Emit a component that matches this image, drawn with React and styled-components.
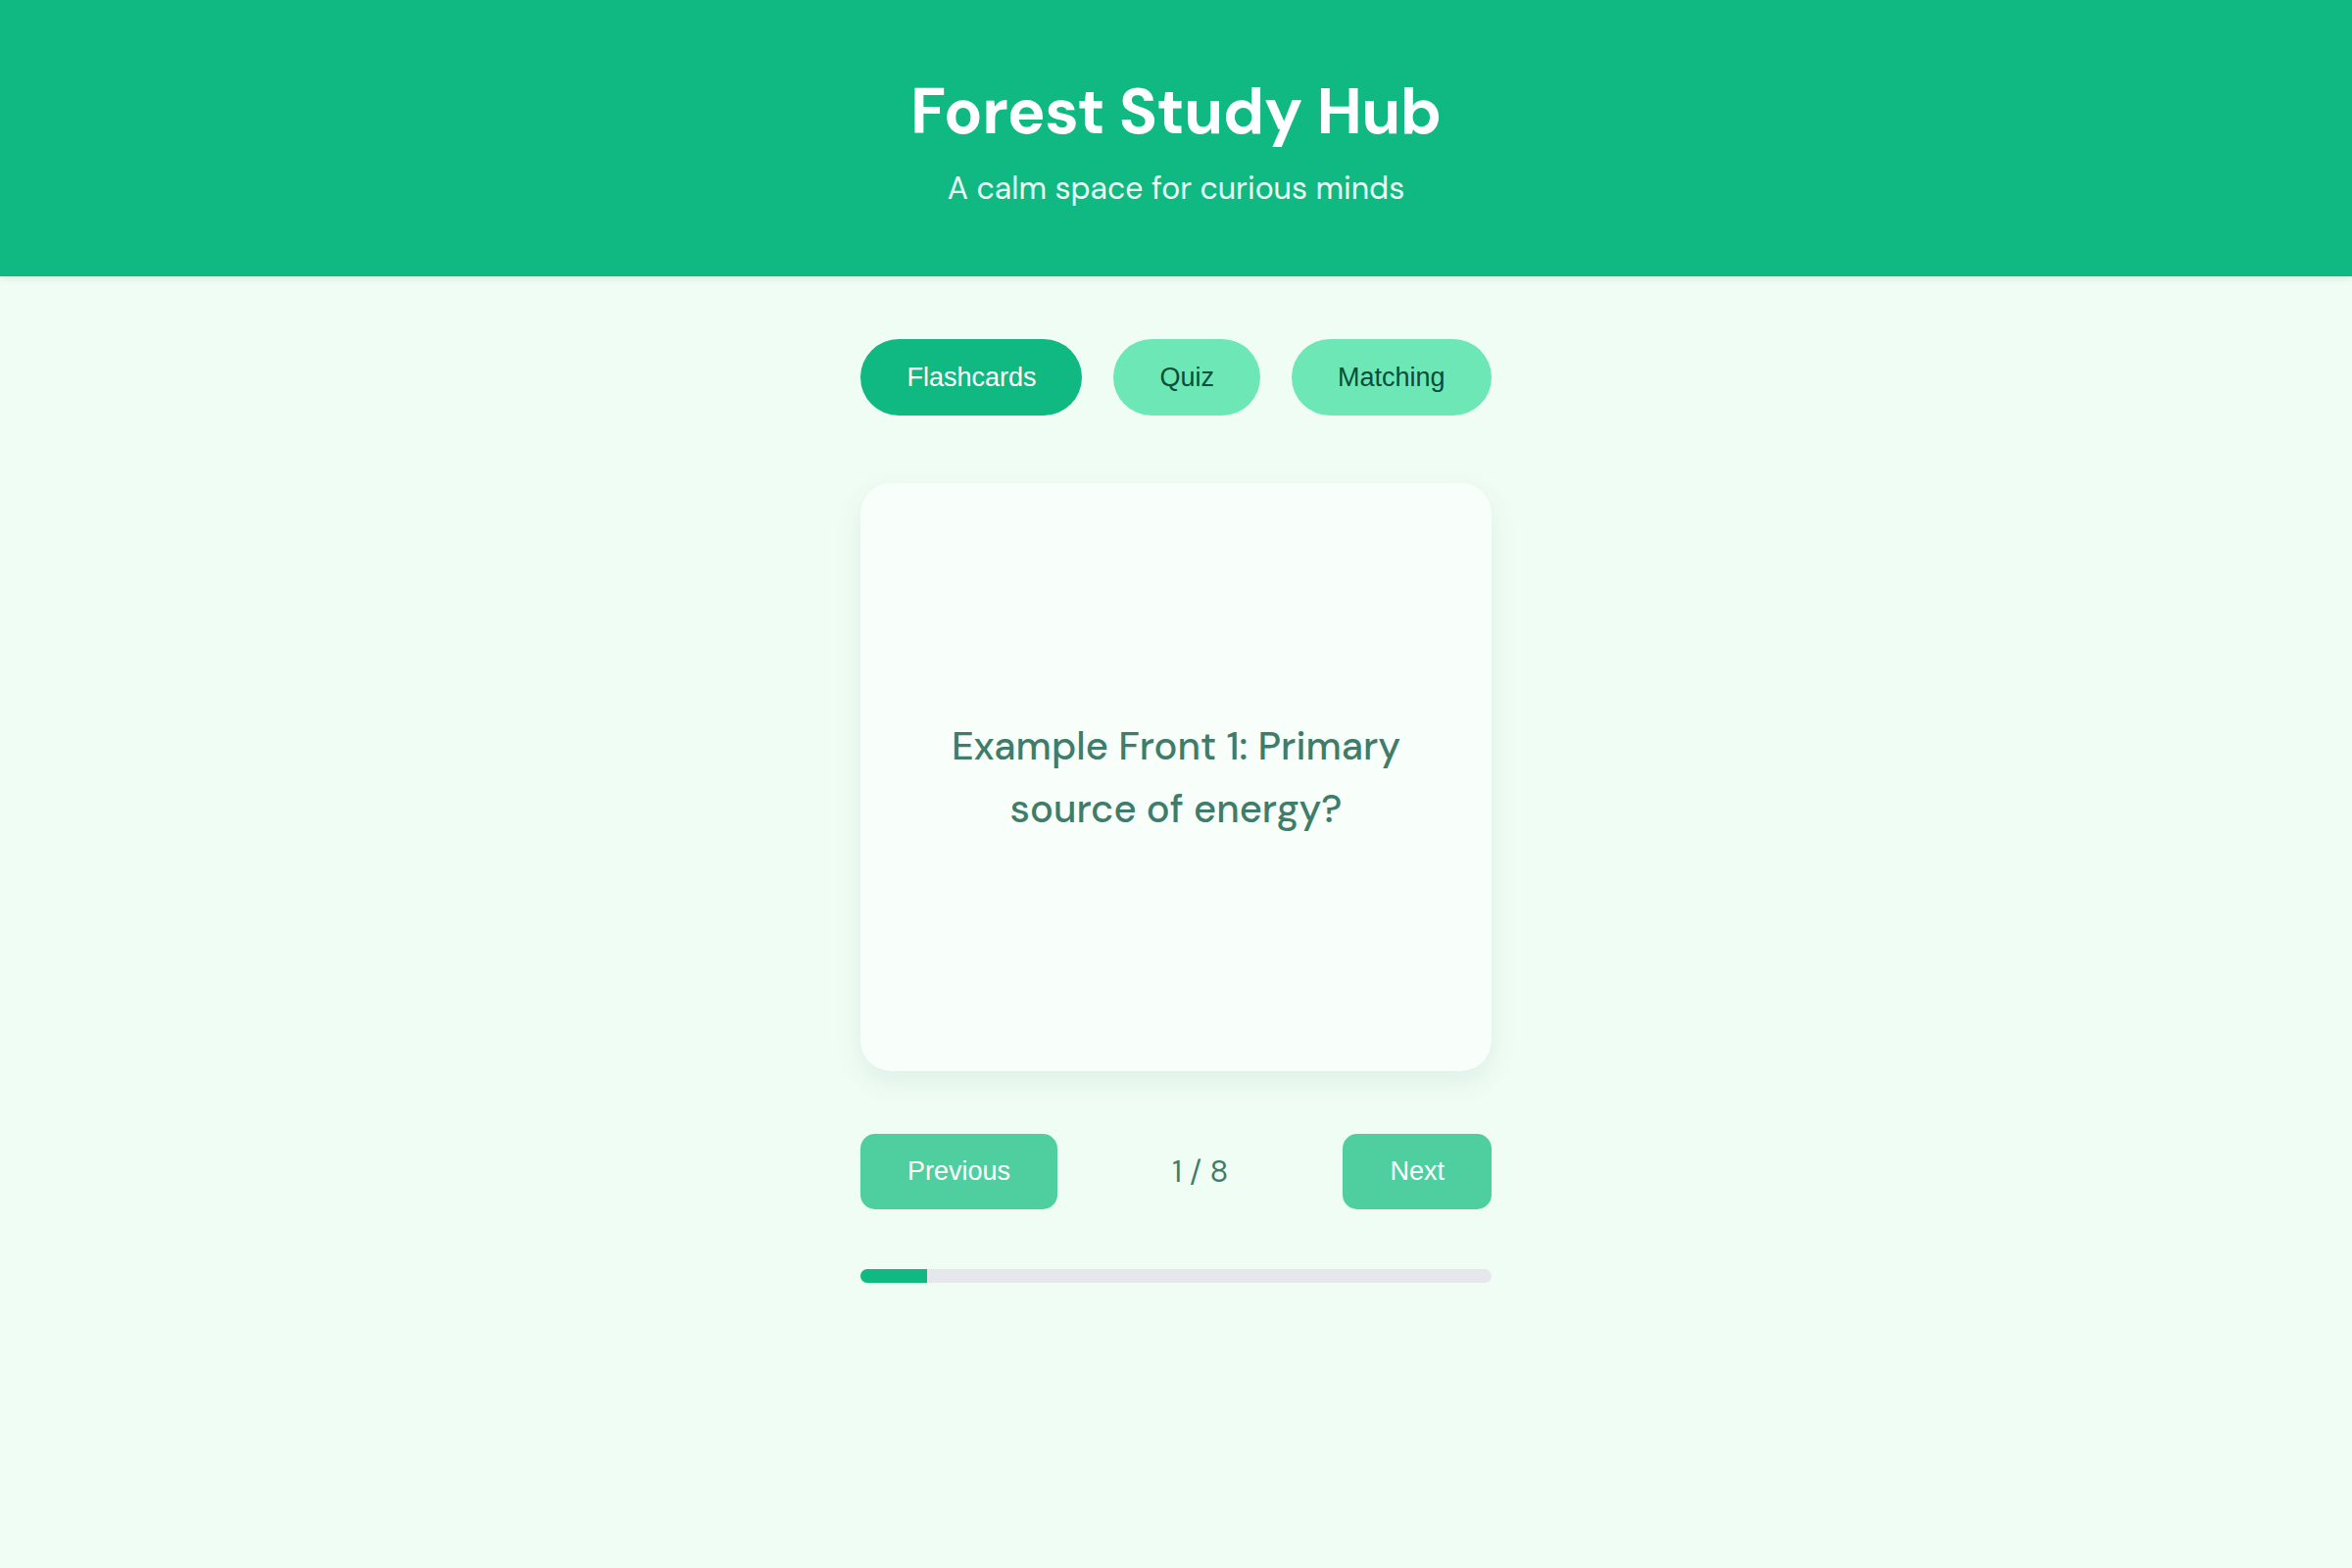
import React, { useState } from "react";
import styled, { createGlobalStyle } from "styled-components";

const cards = [
  { front: "Example Front 1: Primary source of energy?", back: "The Sun" },
  { front: "Example Front 2", back: "Back 2" },
  { front: "Example Front 3", back: "Back 3" },
  { front: "Example Front 4", back: "Back 4" },
  { front: "Example Front 5", back: "Back 5" },
  { front: "Example Front 6", back: "Back 6" },
  { front: "Example Front 7", back: "Back 7" },
  { front: "Example Front 8", back: "Back 8" },
];

const tabs = ["Flashcards", "Quiz", "Matching"];

const App = () => {
  const [tab, setTab] = useState("Flashcards");
  const [index, setIndex] = useState(0);
  const [flipped, setFlipped] = useState(false);

  const go = (step) => {
    setFlipped(false);
    setIndex((i) => Math.min(cards.length - 1, Math.max(0, i + step)));
  };

  return (
    <>
      <GlobalStyle />
      <Header>
        <Title>Forest Study Hub</Title>
        <Subtitle>A calm space for curious minds</Subtitle>
      </Header>
      <Main>
        <Tabs>
          {tabs.map((t) => (
            <Tab key={t} active={t === tab} onClick={() => setTab(t)}>
              {t}
            </Tab>
          ))}
        </Tabs>
        <Card onClick={() => setFlipped(!flipped)}>
          <CardText>
            {flipped ? cards[index].back : cards[index].front}
          </CardText>
        </Card>
        <Nav>
          <NavButton onClick={() => go(-1)}>Previous</NavButton>
          <Counter>
            {index + 1} / {cards.length}
          </Counter>
          <NavButton onClick={() => go(1)}>Next</NavButton>
        </Nav>
        <Track>
          <Fill style={{ width: `${((index + 1) / cards.length) * 85}%` }} />
        </Track>
      </Main>
    </>
  );
};

const GlobalStyle = createGlobalStyle`
  body {
    margin: 0;
    background: #f0fdf4;
    font-family: "DM Sans", Inter, "Noto Sans", sans-serif;
    min-height: 100vh;
  }
`;

const Header = styled.header`
  background: #10b981;
  height: 282px;
  box-sizing: border-box;
  padding-top: 79px;
  text-align: center;
  color: white;
  box-shadow: 0 2px 8px rgba(0, 0, 0, 0.08);
`;

const Title = styled.h1`
  margin: 0;
  font-size: 65px;
  font-weight: 700;
  line-height: 1.1;
  letter-spacing: -0.5px;
`;

const Subtitle = styled.p`
  margin: 20px 0 0;
  font-size: 32px;
  font-weight: 400;
  color: #ecfdf5;
`;

const Main = styled.main`
  width: 644px;
  margin: 0 auto;
  padding-top: 64px;
  display: flex;
  flex-direction: column;
`;

const Tabs = styled.div`
  display: flex;
  justify-content: center;
  gap: 32px;
`;

const Tab = styled.button`
  height: 78px;
  padding: 0 47px;
  border: none;
  border-radius: 999px;
  font-family: "Liberation Sans", Arial, sans-serif;
  font-size: 27px;
  cursor: pointer;
  background: ${(p) => (p.active ? "#10b981" : "#6ee7b7")};
  color: ${(p) => (p.active ? "#ffffff" : "#064e3b")};
`;

const Card = styled.div`
  margin-top: 69px;
  height: 600px;
  background: #f8fffb;
  border-radius: 32px;
  box-shadow: 0 10px 30px rgba(16, 80, 50, 0.08);
  display: flex;
  align-items: center;
  justify-content: center;
  padding: 0 56px;
  box-sizing: border-box;
  cursor: pointer;
`;

const CardText = styled.p`
  margin: 0;
  text-align: center;
  font-size: 40px;
  font-weight: 500;
  line-height: 64px;
  color: #3f7d6a;
`;

const Nav = styled.div`
  margin-top: 64px;
  display: flex;
  align-items: center;
  justify-content: space-between;
`;

const NavButton = styled.button`
  height: 77px;
  padding: 0 48px;
  border: none;
  border-radius: 15px;
  background: #4fcfa0;
  color: #ffffff;
  font-family: "Liberation Sans", Arial, sans-serif;
  font-size: 27px;
  cursor: pointer;
`;

const Counter = styled.span`
  font-size: 31px;
  color: #3f7d6a;
`;

const Track = styled.div`
  margin-top: 61px;
  height: 14px;
  border-radius: 999px;
  background: #e5e7eb;
  overflow: hidden;
`;

const Fill = styled.div`
  height: 100%;
  background: #10b981;
`;

export default App;
